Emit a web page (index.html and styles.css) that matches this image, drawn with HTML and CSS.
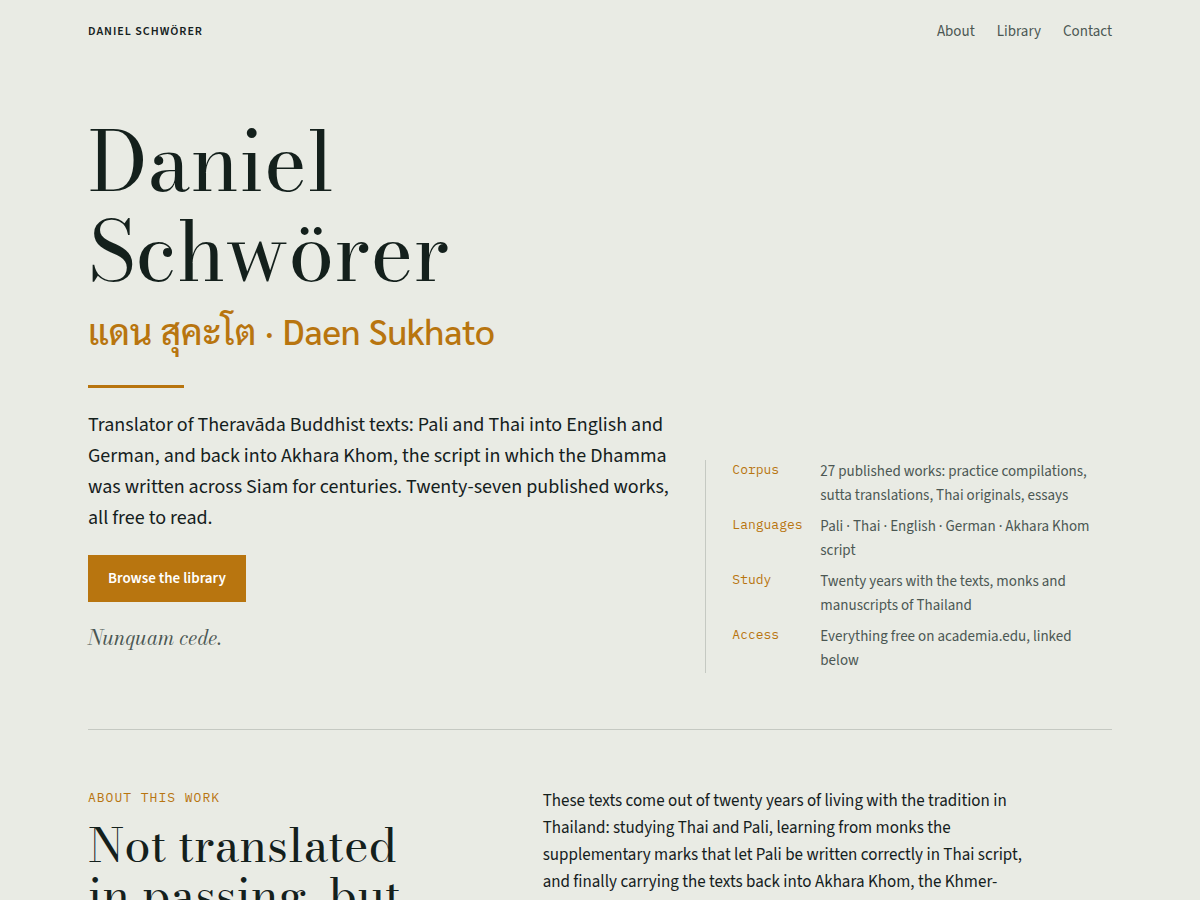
FILE: index.html
```html
<!DOCTYPE html>
<html lang="en">
<head>
<meta charset="utf-8">
<title>Daniel Schwörer</title>
<meta name="viewport" content="width=device-width, initial-scale=1">
<link rel="stylesheet" href="styles.css">
</head>
<body>
<div class="wrap">
  <header class="site-header">
    <a class="brand" href="#top">DANIEL SCHWÖRER</a>
    <nav class="nav">
      <a href="#about">About</a>
      <a href="#library">Library</a>
      <a href="#contact">Contact</a>
    </nav>
  </header>
  <main>
    <section class="hero" id="top">
      <div class="intro">
        <h1 class="name">Daniel<br>Schwörer</h1>
        <p class="alias"><span lang="th">แดน สุคะโต</span> · Daen Sukhato</p>
        <hr class="rule">
        <p class="lead">Translator of Theravāda Buddhist texts: Pali and Thai into English and<br>German, and back into Akhara Khom, the script in which the Dhamma<br>was written across Siam for centuries. Twenty-seven published works,<br>all free to read.</p>
        <a class="cta" href="#library">Browse the library</a>
        <p class="motto">Nunquam cede.</p>
      </div>
      <dl class="facts">
        <dt>Corpus</dt><dd>27 published works: practice compilations, sutta translations, Thai originals, essays</dd>
        <dt>Languages</dt><dd>Pali · Thai · English · German · Akhara Khom script</dd>
        <dt>Study</dt><dd>Twenty years with the texts, monks and<br>manuscripts of Thailand</dd>
        <dt>Access</dt><dd>Everything free on academia.edu, linked<br>below</dd>
      </dl>
    </section>
    <section class="about" id="about">
      <div>
        <p class="eyebrow">ABOUT THIS WORK</p>
        <h2 class="heading">Not translated<br>in passing, but</h2>
      </div>
      <p class="body-text">These texts come out of twenty years of living with the tradition in<br>Thailand: studying Thai and Pali, learning from monks the<br>supplementary marks that let Pali be written correctly in Thai script,<br>and finally carrying the texts back into Akhara Khom, the Khmer-</p>
    </section>
  </main>
</div>
</body>
</html>
```
FILE: styles.css
```css
* { box-sizing: border-box; }

body {
  margin: 0;
  background: #e9ebe4;
  color: #14201c;
  font-family: "Source Sans 3", "Source Sans Pro", "Noto Sans", sans-serif;
  font-size: 17px;
  line-height: 27px;
}

p, h1, h2, dl, dd { margin: 0; }
a { color: inherit; text-decoration: none; }

.wrap { max-width: 1120px; margin: 0 auto; padding: 0 48px; }

.site-header {
  display: flex;
  justify-content: space-between;
  align-items: center;
  padding: 18px 0 16px;
}

.brand { font-size: 12px; font-weight: 600; letter-spacing: 1px; }
.nav { display: flex; gap: 22px; font-size: 15px; color: #4b5753; }

.name, .heading, .motto {
  font-family: "Bodoni Moda", "Liberation Serif", serif;
  font-weight: 400;
}

.hero {
  display: grid;
  grid-template-columns: minmax(0, 7fr) minmax(0, 5fr);
  column-gap: 48px;
  align-items: end;
  padding: 56px 0;
  border-bottom: 1px solid #c5c9c2;
}

.name { font-size: 82px; line-height: 90px; }

.alias {
  margin-top: 6px;
  color: #b8750f;
  font-family: "Sarabun", "Noto Sans Thai", "Source Sans 3", "Noto Sans", sans-serif;
  font-size: 35px;
  line-height: 56px;
  font-weight: 500;
}

.rule { width: 96px; height: 3px; margin: 26px 0 22px; border: 0; background: #b8750f; }
.lead { font-size: 20px; line-height: 31px; white-space: nowrap; }

.cta {
  display: inline-block;
  margin-top: 21px;
  padding: 10px 20px;
  background: #b8750f;
  color: #ffffff;
  font-size: 15px;
  font-weight: 600;
}

.motto {
  margin: 22px 0;
  color: #4b5753;
  font-size: 20px;
  font-style: italic;
}

.facts {
  display: grid;
  grid-template-columns: 72px 1fr;
  gap: 7px 16px;
  padding-left: 26px;
  border-left: 1px solid #c5c9c2;
  font-size: 15px;
  line-height: 24px;
  color: #4b5753;
}
.facts dt { color: #b8750f; font-family: "IBM Plex Mono", "Liberation Mono", monospace; font-size: 13px; line-height: 20px; }

.about { display: grid; grid-template-columns: 5fr 7fr; column-gap: 48px; padding: 58px 0 48px; }
.eyebrow { color: #b8750f; font-family: "IBM Plex Mono", "Liberation Mono", monospace; font-size: 13px; line-height: 20px; letter-spacing: 1px; }
.heading { margin-top: 12px; font-size: 47px; line-height: 50px; }
```
